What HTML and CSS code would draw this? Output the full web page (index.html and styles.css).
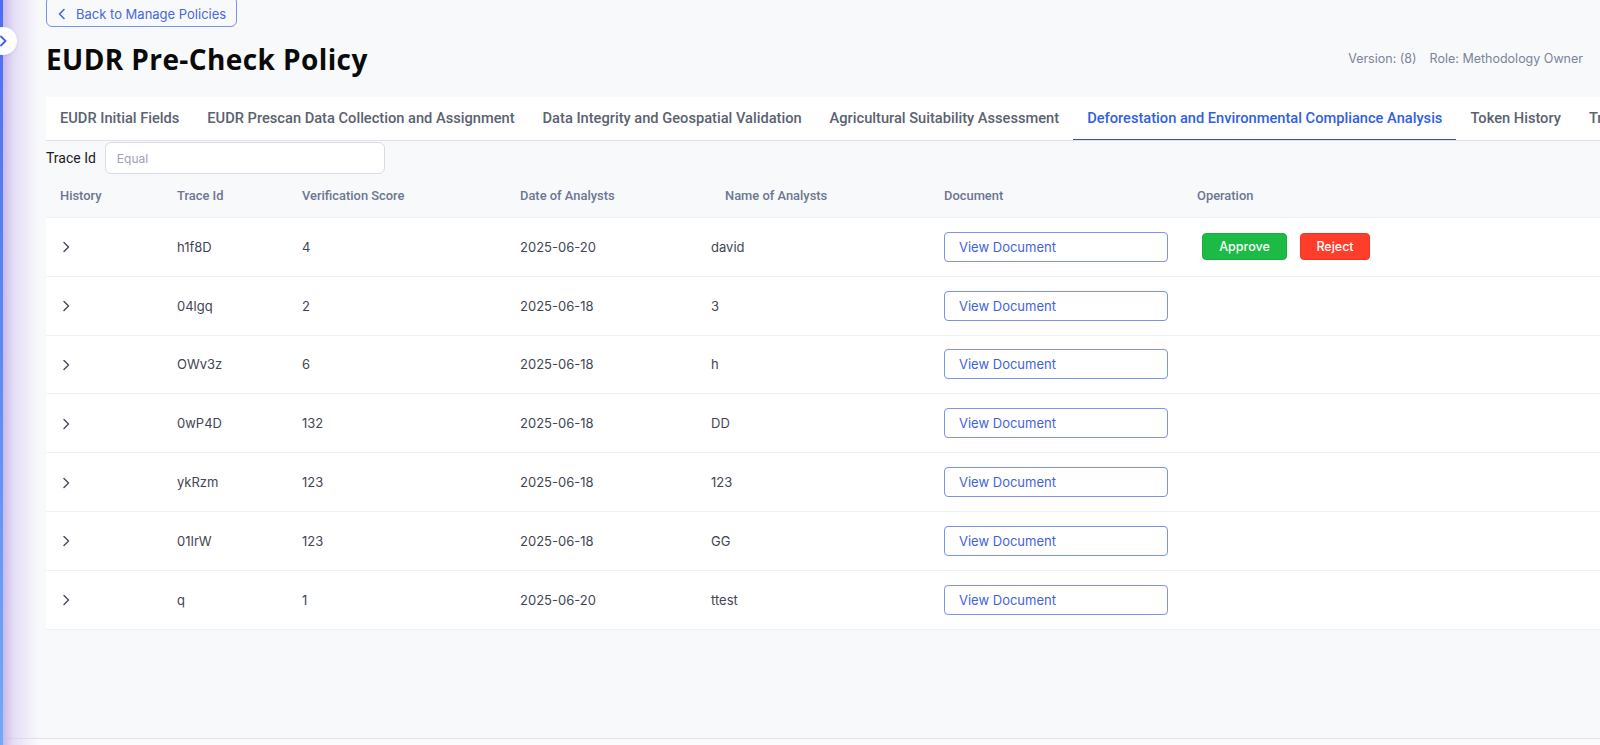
FILE: index.html
```html
<!DOCTYPE html>
<html lang="en">
<head>
<meta charset="utf-8">
<title>EUDR Pre-Check Policy</title>
<link rel="stylesheet" href="styles.css">
</head>
<body>
<div class="app">
  <aside class="rail">
    <button class="rail-toggle" aria-label="Expand">
      <svg width="8" height="12" viewBox="0 0 8 12"><path d="M2 1.5l4.5 4.5L2 10.5" fill="none" stroke="#3d63e0" stroke-width="1.8" stroke-linecap="round" stroke-linejoin="round"/></svg>
    </button>
  </aside>
  <div class="column">
    <main class="content">
      <a class="back" href="#">
        <svg width="8" height="12" viewBox="0 0 8 12"><path d="M6 1.5L1.5 6 6 10.5" fill="none" stroke="#4768de" stroke-width="1.6" stroke-linecap="round" stroke-linejoin="round"/></svg>
        <span>Back to Manage Policies</span>
      </a>
      <div class="head">
        <h1 class="title">EUDR Pre-Check Policy</h1>
        <div class="meta"><span>Version: (8)</span><span>Role: Methodology Owner</span></div>
      </div>
      <nav class="tabs">
        <span class="tab">EUDR Initial Fields</span>
        <span class="tab">EUDR Prescan Data Collection and Assignment</span>
        <span class="tab">Data Integrity and Geospatial Validation</span>
        <span class="tab">Agricultural Suitability Assessment</span>
        <span class="tab active">Deforestation and Environmental Compliance Analysis</span>
        <span class="tab">Token History</span>
        <span class="tab">Trust Chain</span>
      </nav>
      <div class="filter">
        <label class="filter-label">Trace Id</label>
        <input class="filter-input" type="text" placeholder="Equal">
      </div>
      <div class="grid">
        <div class="row header">
          <div class="cell">History</div><div class="cell">Trace Id</div><div class="cell">Verification Score</div><div class="cell">Date of Analysts</div><div class="cell">Name of Analysts</div><div class="cell">Document</div><div class="cell">Operation</div>
        </div>
        <div class="row">
          <div class="cell"><svg class="chev" width="8" height="12" viewBox="0 0 8 12"><path d="M2 1.5l4.5 4.5L2 10.5" fill="none" stroke="#444a57" stroke-width="1.4" stroke-linecap="round" stroke-linejoin="round"/></svg></div>
          <div class="cell">h1f8D</div><div class="cell">4</div><div class="cell">2025-06-20</div><div class="cell name">david</div>
          <div class="cell"><button class="doc">View Document</button></div>
          <div class="cell ops"><button class="approve">Approve</button><button class="reject">Reject</button></div>
        </div>
        <div class="row">
          <div class="cell"><svg class="chev" width="8" height="12" viewBox="0 0 8 12"><path d="M2 1.5l4.5 4.5L2 10.5" fill="none" stroke="#444a57" stroke-width="1.4" stroke-linecap="round" stroke-linejoin="round"/></svg></div>
          <div class="cell">04lgq</div><div class="cell">2</div><div class="cell">2025-06-18</div><div class="cell name">3</div>
          <div class="cell"><button class="doc">View Document</button></div>
          <div class="cell"></div>
        </div>
        <div class="row">
          <div class="cell"><svg class="chev" width="8" height="12" viewBox="0 0 8 12"><path d="M2 1.5l4.5 4.5L2 10.5" fill="none" stroke="#444a57" stroke-width="1.4" stroke-linecap="round" stroke-linejoin="round"/></svg></div>
          <div class="cell">OWv3z</div><div class="cell">6</div><div class="cell">2025-06-18</div><div class="cell name">h</div>
          <div class="cell"><button class="doc">View Document</button></div>
          <div class="cell"></div>
        </div>
        <div class="row">
          <div class="cell"><svg class="chev" width="8" height="12" viewBox="0 0 8 12"><path d="M2 1.5l4.5 4.5L2 10.5" fill="none" stroke="#444a57" stroke-width="1.4" stroke-linecap="round" stroke-linejoin="round"/></svg></div>
          <div class="cell">0wP4D</div><div class="cell">132</div><div class="cell">2025-06-18</div><div class="cell name">DD</div>
          <div class="cell"><button class="doc">View Document</button></div>
          <div class="cell"></div>
        </div>
        <div class="row">
          <div class="cell"><svg class="chev" width="8" height="12" viewBox="0 0 8 12"><path d="M2 1.5l4.5 4.5L2 10.5" fill="none" stroke="#444a57" stroke-width="1.4" stroke-linecap="round" stroke-linejoin="round"/></svg></div>
          <div class="cell">ykRzm</div><div class="cell">123</div><div class="cell">2025-06-18</div><div class="cell name">123</div>
          <div class="cell"><button class="doc">View Document</button></div>
          <div class="cell"></div>
        </div>
        <div class="row">
          <div class="cell"><svg class="chev" width="8" height="12" viewBox="0 0 8 12"><path d="M2 1.5l4.5 4.5L2 10.5" fill="none" stroke="#444a57" stroke-width="1.4" stroke-linecap="round" stroke-linejoin="round"/></svg></div>
          <div class="cell">01IrW</div><div class="cell">123</div><div class="cell">2025-06-18</div><div class="cell name">GG</div>
          <div class="cell"><button class="doc">View Document</button></div>
          <div class="cell"></div>
        </div>
        <div class="row">
          <div class="cell"><svg class="chev" width="8" height="12" viewBox="0 0 8 12"><path d="M2 1.5l4.5 4.5L2 10.5" fill="none" stroke="#444a57" stroke-width="1.4" stroke-linecap="round" stroke-linejoin="round"/></svg></div>
          <div class="cell">q</div><div class="cell">1</div><div class="cell">2025-06-20</div><div class="cell name">ttest</div>
          <div class="cell"><button class="doc">View Document</button></div>
          <div class="cell"></div>
        </div>
      </div>
    </main>
    <footer class="foot"></footer>
  </div>
</div>
</body>
</html>
```

FILE: styles.css
```css
* { box-sizing: border-box; }
html, body { margin: 0; padding: 0; }
body {
  width: 1600px;
  height: 745px;
  overflow: hidden;
  background: #f8f9fb;
  font-family: "Inter", "Noto Sans", sans-serif;
  color: #3f4654;
}
.app {
  display: flex;
  height: 745px;
}
.rail {
  position: relative;
  width: 3px;
  flex: 0 0 3px;
  background: linear-gradient(180deg, #4c6cf1 0%, #5a8cf3 50%, #70aaf6 100%);
  z-index: 5;
}
.rail::after {
  content: "";
  position: absolute;
  left: 3px;
  top: 0;
  bottom: 0;
  width: 36px;
  background: linear-gradient(90deg, rgba(196,178,232,0.9) 0%, rgba(215,203,240,0.6) 30%, rgba(248,249,251,0) 100%);
  pointer-events: none;
}
.rail-toggle {
  position: absolute;
  left: -11px;
  top: 27px;
  width: 28px;
  height: 28px;
  border-radius: 50%;
  border: none;
  background: #fff;
  box-shadow: 0 1px 3px rgba(80,90,140,0.15);
  padding: 0;
  display: flex;
  align-items: center;
  justify-content: center;
  z-index: 6;
}
.column {
  flex: 1;
  display: flex;
  flex-direction: column;
  min-width: 0;
}
.content {
  flex: 1;
  padding-left: 43px;
  overflow: hidden;
  display: flex;
  flex-direction: column;
}
.back {
  margin-top: -4px;
  align-self: flex-start;
  width: 191px;
  height: 31px;
  display: flex;
  align-items: center;
  gap: 10px;
  padding: 4px 0 0 11px;
  border: 1px solid #7d93e8;
  border-radius: 6px;
  color: #4768de;
  text-decoration: none;
  font-size: 13px;
}
.head {
  margin-top: 14px;
  height: 36px;
  margin-bottom: 20px;
  display: flex;
  align-items: center;
  justify-content: space-between;
  padding-right: 17px;
}
.title {
  margin: 0;
  font-family: "Open Sans", sans-serif;
  font-weight: 700;
  font-size: 28px;
  line-height: 36px;
  color: #0a0a0a;
  letter-spacing: 0.4px;
}
.meta {
  display: flex;
  gap: 13px;
  font-size: 12.5px;
  color: #7b849a;
  margin-top: -2px;
}
.tabs {
  display: flex;
  background: #fff;
  border-bottom: 1px solid #dfe2e8;
  height: 44px;
  white-space: nowrap;
  overflow: hidden;
}
.tab {
  flex: 0 0 auto;
  padding: 0 14px;
  height: 43px;
  line-height: 42px;
  font-family: "Roboto", sans-serif;
  font-weight: 500;
  font-size: 14.65px;
  color: #5b6270;
}
.tab.active {
  color: #3160e3;
  border-bottom: 2px solid #2552e0;
  height: 44px;
}
.filter {
  display: flex;
  align-items: center;
  gap: 9px;
  margin-top: 1px;
  height: 32px;
}
.filter-label {
  font-family: "Roboto", sans-serif;
  font-size: 14px;
  color: #1b1d22;
}
.filter-input {
  width: 280px;
  height: 32px;
  border: 1px solid #d8dce5;
  border-radius: 6px;
  background: #fff;
  padding: 0 11px;
  font-family: "Inter", sans-serif;
  font-size: 12px;
  color: #3f4654;
  outline: none;
}
.filter-input::placeholder { color: #9aa2b4; }
.grid {
  display: flex;
  flex-direction: column;
}
.row {
  display: grid;
  grid-template-columns: 117px 125px 218px 205px 219px 253px 1fr;
  height: 58.8px;
  align-items: center;
  background: #fff;
  border-bottom: 1px solid #eef0f4;
  font-size: 13px;
  color: #3f4654;
}
.row.header {
  height: 44px;
  background: transparent;
  font-family: "Roboto", sans-serif;
  font-weight: 500;
  font-size: 12.9px;
  color: #6d7690;
}
.cell {
  padding-left: 14px;
  white-space: nowrap;
}
.cell.name { padding-left: 0; }
.chev { display: block; margin-left: 2px; margin-top: 1px; }
.doc {
  width: 224px;
  height: 30px;
  border: 1px solid #7d93e8;
  border-radius: 4px;
  background: #fff;
  color: #3f63dd;
  font-family: "Inter", sans-serif;
  font-size: 13px;
  text-align: left;
  padding: 0 0 0 14px;
}
.ops {
  display: flex;
  gap: 13px;
  padding-left: 19px;
}
.approve, .reject {
  height: 27px;
  border-radius: 4px;
  color: #fff;
  font-family: "Inter", sans-serif;
  font-weight: 500;
  font-size: 12.5px;
  padding: 0;
}
.approve {
  width: 85px;
  background: #1bbb45;
  border: 1px solid #17b03f;
}
.reject {
  width: 70px;
  background: #ff3d2b;
  border: 1px solid #f03322;
}
.foot {
  height: 7px;
  flex: 0 0 7px;
  border-top: 1px solid #dde3ee;
  background: #fbfbfd;
}
```
